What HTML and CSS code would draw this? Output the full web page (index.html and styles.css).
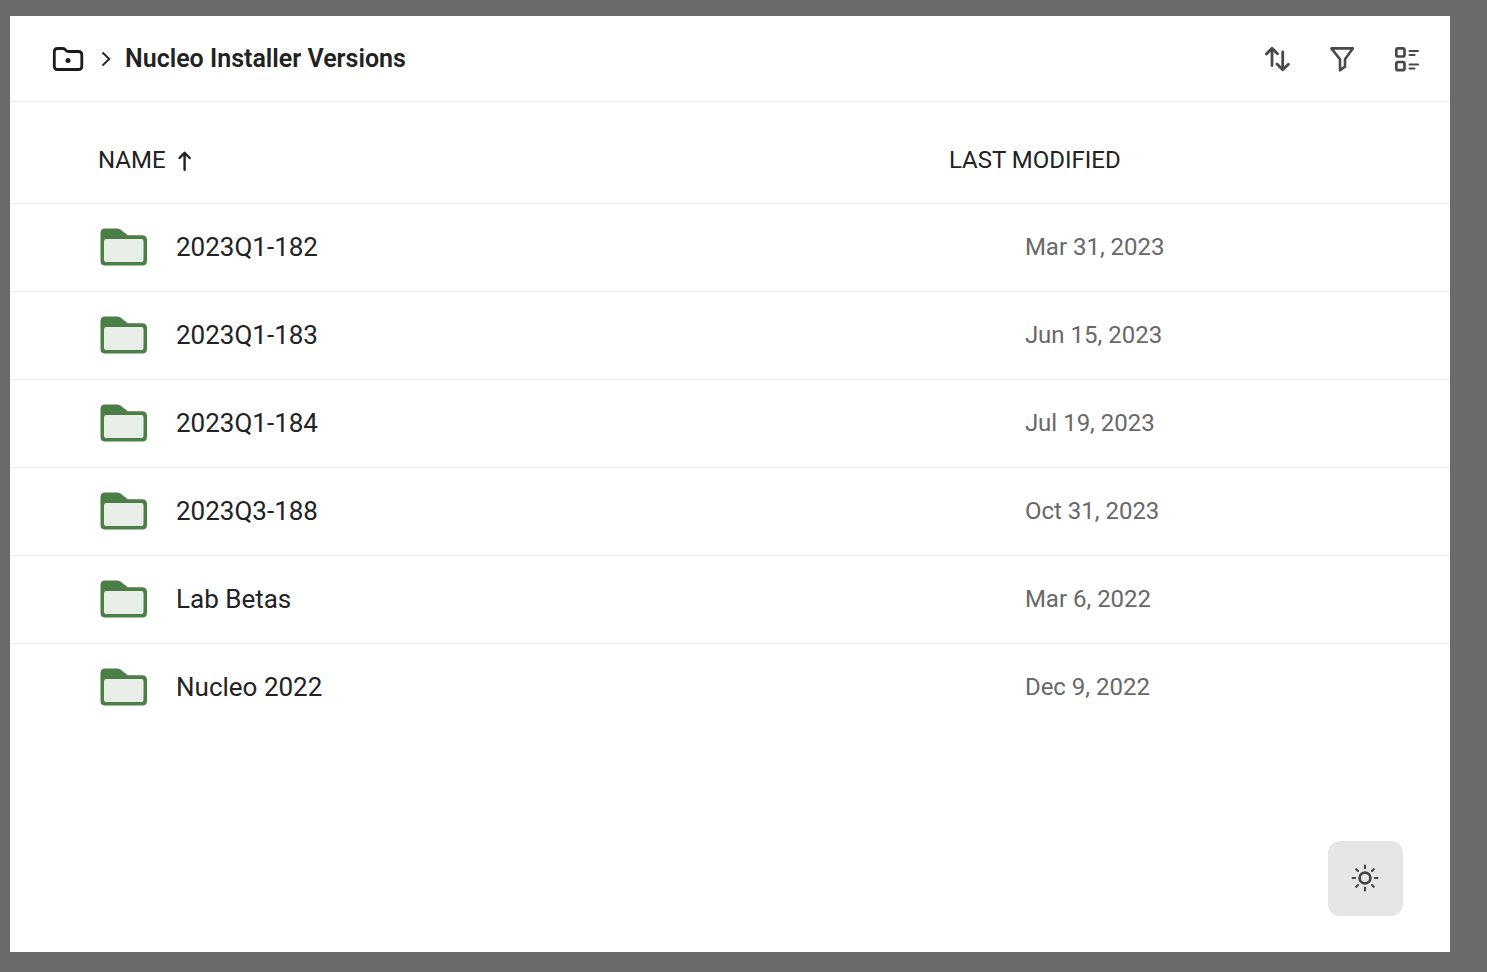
FILE: index.html
```html
<!DOCTYPE html>
<html lang="en">
<head>
    <meta charset="UTF-8">
    <meta name="viewport" content="width=device-width, initial-scale=1.0">
    <title>Nucleo Installer Versions</title>
    <link rel="stylesheet" href="styles.css">
</head>
<body>
    <!-- Shared icons -->
    <svg class="icon-defs" aria-hidden="true">
        <symbol id="folder" viewBox="0 0 48 38">
            <path d="M5 0.5H17Q19 0.5 20.5 1.6L26.5 6.3Q27.5 7.3 29 7.3H42Q47 7.3 47 12V33Q47 37.5 42.5 37.5H5Q0.5 37.5 0.5 33V5Q0.5 0.5 5 0.5Z" fill="#4b7f46"/>
            <rect x="4" y="11" width="39.5" height="23" rx="2" fill="#e8ede7"/>
        </symbol>
    </svg>

    <main class="panel">
        <header class="toolbar">
            <nav class="breadcrumb" aria-label="Breadcrumb">
                <a href="#" class="home-link" aria-label="Home folder">
                    <svg width="32" height="26" viewBox="0 0 32 26" fill="none">
                        <path d="M5.5 2.5H11Q12.5 2.5 13.5 3.8L14.2 4.6Q15 5.5 16.5 5.5H26.5Q29.8 5.5 29.8 8.8V20.2Q29.8 23.5 26.5 23.5H5.5Q2.3 23.5 2.3 20.2V5.7Q2.3 2.5 5.5 2.5Z" stroke="#1c1c1c" stroke-width="2.8"/>
                        <circle cx="16" cy="14.5" r="2.5" fill="#1c1c1c"/>
                    </svg>
                </a>
                <svg class="chevron" width="10" height="16" viewBox="0 0 10 16" fill="none">
                    <path d="M1.5 1.5L8.3 8L1.5 14.5" stroke="#222" stroke-width="1.8"/>
                </svg>
                <h1>Nucleo Installer Versions</h1>
            </nav>
            <div class="actions">
                <button type="button" class="icon-btn" aria-label="Sort">
                    <svg width="26" height="26" viewBox="0 0 26 26" fill="none" stroke="#484848" stroke-width="2.8" stroke-linecap="round" stroke-linejoin="round">
                        <path d="M8 19.5V2.5M2.4 8L8 2.2L13.5 7.8M18.7 6V23.5M13 18L18.7 23.8L24.4 18.3"/>
                    </svg>
                </button>
                <button type="button" class="icon-btn" aria-label="Filter">
                    <svg width="26" height="26" viewBox="0 0 26 26" fill="none" stroke="#484848" stroke-width="2.6" stroke-linejoin="round">
                        <path d="M2.4 2.4H23.8L16 13.2V20.6L11 24.3V13.2Z"/>
                    </svg>
                </button>
                <button type="button" class="icon-btn" aria-label="Change view">
                    <svg width="26" height="26" viewBox="0 0 26 26" fill="none" stroke="#484848" stroke-linecap="round">
                        <rect x="2.3" y="2.3" width="8.2" height="8.2" rx="1.8" stroke-width="2.7"/>
                        <rect x="2.3" y="16" width="8.2" height="8.2" rx="1.8" stroke-width="2.7"/>
                        <path d="M15.5 5H24M15.5 9H20.5M15.5 18.5H24M15.5 22.5H20.5" stroke-width="2"/>
                    </svg>
                </button>
            </div>
        </header>

        <table class="files">
            <thead>
                <tr>
                    <th scope="col" class="name-col">
                        <button type="button" class="sort-btn">
                            NAME
                            <svg width="14" height="22" viewBox="0 0 14 22" fill="none" stroke="#222" stroke-width="2.4" stroke-linecap="round" stroke-linejoin="round">
                                <path d="M6.6 20.8V4M1.5 9L6.6 3.8L11.7 9"/>
                            </svg>
                        </button>
                    </th>
                    <th scope="col">LAST MODIFIED</th>
                </tr>
            </thead>
            <tbody>
                <tr>
                    <td><a href="#" class="folder-link"><svg class="folder-icon"><use href="#folder"/></svg>2023Q1-182</a></td>
                    <td class="date">Mar 31, 2023</td>
                </tr>
                <tr>
                    <td><a href="#" class="folder-link"><svg class="folder-icon"><use href="#folder"/></svg>2023Q1-183</a></td>
                    <td class="date">Jun 15, 2023</td>
                </tr>
                <tr>
                    <td><a href="#" class="folder-link"><svg class="folder-icon"><use href="#folder"/></svg>2023Q1-184</a></td>
                    <td class="date">Jul 19, 2023</td>
                </tr>
                <tr>
                    <td><a href="#" class="folder-link"><svg class="folder-icon"><use href="#folder"/></svg>2023Q3-188</a></td>
                    <td class="date">Oct 31, 2023</td>
                </tr>
                <tr>
                    <td><a href="#" class="folder-link"><svg class="folder-icon"><use href="#folder"/></svg>Lab Betas</a></td>
                    <td class="date">Mar 6, 2022</td>
                </tr>
                <tr>
                    <td><a href="#" class="folder-link"><svg class="folder-icon"><use href="#folder"/></svg>Nucleo 2022</a></td>
                    <td class="date">Dec 9, 2022</td>
                </tr>
            </tbody>
        </table>

        <button type="button" class="theme-btn" aria-label="Switch theme">
            <svg width="29" height="29" viewBox="0 0 29 29" fill="none" stroke="#444" stroke-linecap="round">
                <circle cx="14" cy="14" r="5.4" stroke-width="2.7"/>
                <path d="M14 1.6V4.2M14 23.8V26.4M1.6 14H4.2M23.8 14H26.4M5.2 5.2L7 7M21 21L22.8 22.8M5.2 22.8L7 21M21 7L22.8 5.2" stroke-width="2.1"/>
            </svg>
        </button>
    </main>
</body>
</html>
```
FILE: styles.css
```css
* {
    margin: 0;
    padding: 0;
    box-sizing: border-box;
}

body {
    min-height: 100vh;
    display: flex;
    padding: 16px 37px 20px 10px;
    background-color: #6b6b6b;
    font-family: Roboto, Arial, sans-serif;
    color: #222;
}

button {
    border: none;
    background: none;
    font: inherit;
    color: inherit;
    cursor: pointer;
}

a {
    color: inherit;
    text-decoration: none;
}

svg {
    display: block;
    flex-shrink: 0;
}

.icon-defs {
    display: none;
}

.panel {
    flex: 1;
    display: flex;
    flex-direction: column;
    background-color: #fff;
}

.toolbar {
    display: flex;
    justify-content: space-between;
    align-items: center;
    height: 86px;
    padding: 0 30px 0 42px;
    border-bottom: 1px solid #efefef;
}

.breadcrumb {
    display: flex;
    align-items: center;
}

.chevron {
    margin: 0 14px 0 17px;
}

h1 {
    font-size: 25px;
    font-weight: 600;
}

.actions {
    display: flex;
    gap: 39px;
}

/* File list */
.files {
    width: 100%;
    border-collapse: collapse;
    table-layout: fixed;
}

.files th {
    height: 101px;
    padding-top: 15px;
    font-size: 24px;
    font-weight: 400;
    text-align: left;
}

.files .name-col {
    width: 65.2%;
    padding-left: 88px;
}

.files tr {
    border-bottom: 1px solid #ebebeb;
}

.files tbody tr:last-child {
    border-bottom: none;
}

.files td {
    height: 88px;
}

.sort-btn {
    display: flex;
    align-items: center;
    gap: 12px;
}

.folder-link {
    display: flex;
    align-items: center;
    gap: 28px;
    padding-left: 90px;
    font-size: 26px;
}

.folder-icon {
    width: 48px;
    height: 38px;
}

.files .date {
    padding-left: 76px;
    font-size: 24px;
    color: #686868;
}

.theme-btn {
    display: flex;
    align-items: center;
    justify-content: center;
    width: 75px;
    height: 75px;
    margin: auto 47px 36px auto;
    border-radius: 12px;
    background-color: #e6e6e6;
}
```
